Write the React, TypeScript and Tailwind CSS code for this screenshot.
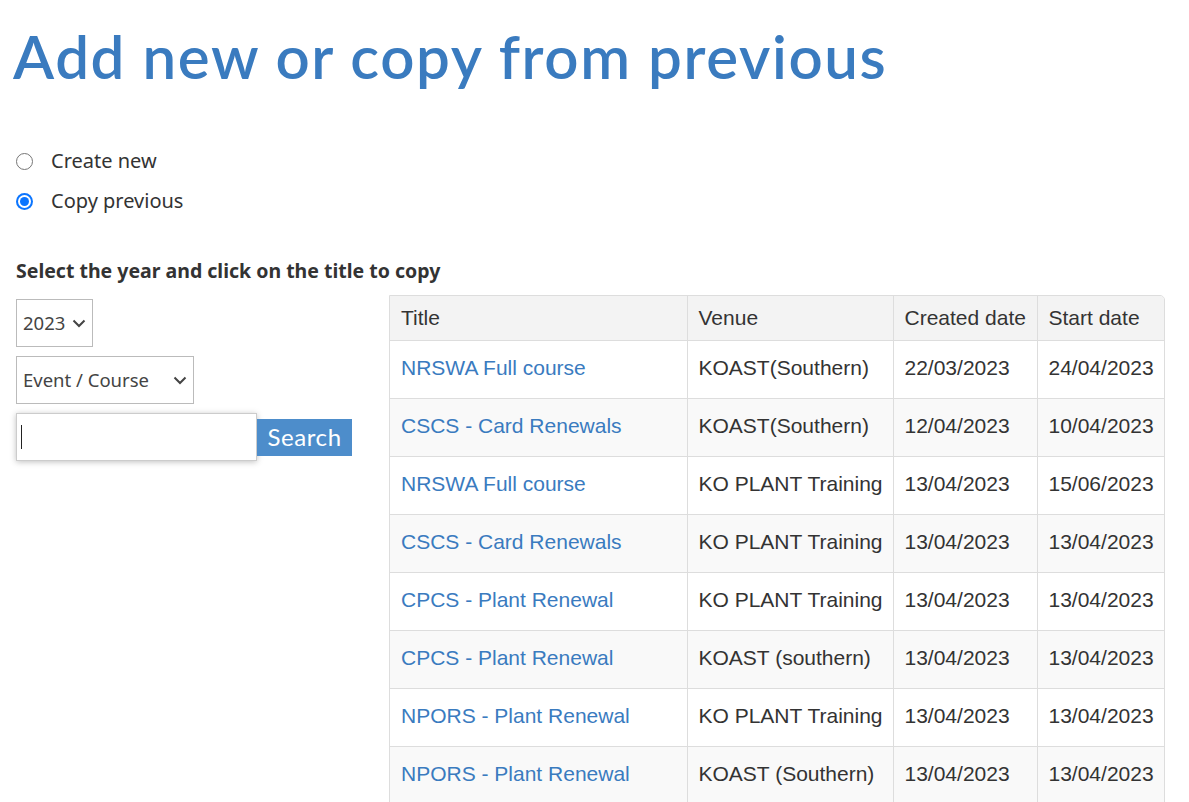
import React from "react";

const rows = [
  ["NRSWA Full course", "KOAST(Southern)", "22/03/2023", "24/04/2023"],
  ["CSCS - Card Renewals", "KOAST(Southern)", "12/04/2023", "10/04/2023"],
  ["NRSWA Full course", "KO PLANT Training", "13/04/2023", "15/06/2023"],
  ["CSCS - Card Renewals", "KO PLANT Training", "13/04/2023", "13/04/2023"],
  ["CPCS - Plant Renewal", "KO PLANT Training", "13/04/2023", "13/04/2023"],
  ["CPCS - Plant Renewal", "KOAST (southern)", "13/04/2023", "13/04/2023"],
  ["NPORS - Plant Renewal", "KO PLANT Training", "13/04/2023", "13/04/2023"],
  ["NPORS - Plant Renewal", "KOAST (Southern)", "13/04/2023", "13/04/2023"],
];

const Chevron = () => (
  <svg width="16" height="16" viewBox="0 0 16 16" fill="none" stroke="#444" strokeWidth="2">
    <path d="M2.5 5.5 L8 11 L13.5 5.5" />
  </svg>
);

export default function App() {
  return (
    <div className="h-[802px] w-[1189px] overflow-hidden bg-white" style={{ fontFamily: '"Open Sans", sans-serif' }}>
      <h1
        className="pl-[13px] pt-[24px] text-[60px] leading-[64px] font-semibold text-[#3a7bbf] tracking-[1.6px]"
        style={{ fontFamily: '"Lato", "Open Sans", sans-serif' }}
      >
        Add new or copy from previous
      </h1>
      <div className="mt-[60px] pl-[16px] flex flex-col gap-[14px] text-[20px] text-[#333]" style={{ fontFamily: '"Noto Sans", sans-serif' }}>
        <label className="flex items-center gap-[18px] h-[26px]">
          <span className="w-[17px] h-[17px] rounded-full border border-[#767676] bg-white" />
          <span>Create new</span>
        </label>
        <label className="flex items-center gap-[18px] h-[26px]">
          <span className="w-[17px] h-[17px] rounded-full bg-[#0b75ff] flex items-center justify-center">
            <span className="w-[13px] h-[13px] rounded-full bg-white flex items-center justify-center">
              <span className="w-[9px] h-[9px] rounded-full bg-[#0b75ff]" />
            </span>
          </span>
          <span>Copy previous</span>
        </label>
      </div>
      <div className="mt-[42px] pl-[16px] text-[19.5px] font-bold text-[#333]" style={{ fontFamily: '"Noto Sans", sans-serif' }}>
        Select the year and click on the title to copy
      </div>
      <div className="flex mt-[10px] pl-[16px]">
        <div className="w-[373px] flex flex-col" style={{ fontFamily: '"Noto Sans", sans-serif' }}>
          <div className="mt-[4px] w-[77px] h-[48px] border border-[#bbb] flex items-center justify-between pl-[6px] pr-[5px] text-[18.5px] text-[#444]">
            <span>2023</span>
            <Chevron />
          </div>
          <div className="mt-[9px] w-[178px] h-[48px] border border-[#bbb] flex items-center justify-between pl-[6px] pr-[5px] text-[18.5px] text-[#444]">
            <span>Event / Course</span>
            <Chevron />
          </div>
          <div className="mt-[9px] flex items-center">
            <div className="w-[241px] h-[48px] border border-[#ccc] bg-white shadow-[0_1px_6px_rgba(0,0,0,0.25)] flex items-center pl-[4px]">
              <span className="w-[1px] h-[24px] bg-[#222]" />
            </div>
            <button
              className="w-[95px] h-[37px] bg-[#4d8dcb] text-white text-[24px] tracking-[0.6px]"
              style={{ fontFamily: '"Lato", sans-serif' }}
            >
              Search
            </button>
          </div>
        </div>
        <div className="w-[776px] border border-[#ddd] rounded-tr-[5px] overflow-hidden" style={{ fontFamily: '"Liberation Sans", Arial, sans-serif' }}>
          <table className="w-full border-collapse text-[21px] text-[#333]">
            <colgroup>
              <col className="w-[297px]" />
              <col className="w-[206px]" />
              <col className="w-[144px]" />
              <col />
            </colgroup>
            <thead>
              <tr className="h-[44px] bg-[#f3f3f3]">
                <th className="text-left font-normal pl-[11px] border-r border-[#ddd]">Title</th>
                <th className="text-left font-normal pl-[11px] border-r border-[#ddd]">Venue</th>
                <th className="text-left font-normal pl-[11px] border-r border-[#ddd]">Created date</th>
                <th className="text-left font-normal pl-[11px]">Start date</th>
              </tr>
            </thead>
            <tbody>
              {rows.map((r, i) => (
                <tr key={i} className={`h-[58px] border-t border-[#ddd] ${i % 2 === 1 ? "bg-[#f9f9f9]" : "bg-white"}`}>
                  <td className="pl-[11px] pb-[4px] border-r border-[#ddd] text-[#3a7bbf] whitespace-nowrap">{r[0]}</td>
                  <td className="pl-[11px] pb-[4px] border-r border-[#ddd] whitespace-nowrap">{r[1]}</td>
                  <td className="pl-[11px] pb-[4px] border-r border-[#ddd]">{r[2]}</td>
                  <td className="pl-[11px] pb-[4px]">{r[3]}</td>
                </tr>
              ))}
            </tbody>
          </table>
        </div>
      </div>
    </div>
  );
}
